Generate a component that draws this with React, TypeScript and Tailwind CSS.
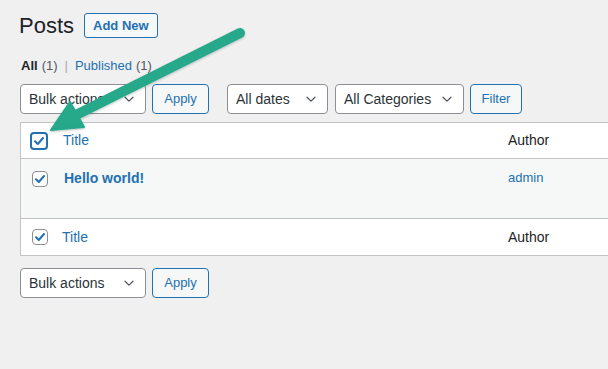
import React from "react";

const Chevron = () => (
  <svg width="14" height="14" viewBox="0 0 16 16" className="shrink-0">
    <path d="M3.5 6 L8 10.5 L12.5 6" fill="none" stroke="#50575e" strokeWidth="1.4" strokeLinecap="round" strokeLinejoin="round" />
  </svg>
);

const Select = ({ label, w }: { label: string; w: string }) => (
  <div className={`${w} h-[30px] flex items-center justify-between bg-white border border-[#8c8f94] rounded-[4px] pl-[8px] pr-[9px] text-[14px] text-[#2c3338]`}>
    <span>{label}</span>
    <Chevron />
  </div>
);

const Btn = ({ label, w }: { label: string; w: string }) => (
  <div className={`${w} h-[30px] flex items-center justify-center bg-[#f6f7f7] border border-[#2271b1] rounded-[4px] text-[13px] text-[#2271b1]`}>
    {label}
  </div>
);

const Check = ({ big }: { big?: boolean }) => (
  <div
    className={
      big
        ? "w-[18px] h-[18px] border-2 border-[#2271b1] rounded-[4px] bg-white flex items-center justify-center"
        : "w-[16px] h-[16px] border border-[#8c8f94] rounded-[4px] bg-white flex items-center justify-center"
    }
  >
    <svg width="12" height="12" viewBox="0 0 12 12">
      <path d="M2 6.2 L4.8 9 L10 3" fill="none" stroke="#2271b1" strokeWidth="2" strokeLinecap="round" strokeLinejoin="round" />
    </svg>
  </div>
);

export default function App() {
  return (
    <div
      className="relative w-[608px] h-[369px] overflow-hidden bg-[#f0f0f1] pl-[20px]"
      style={{ fontFamily: '"Liberation Sans", Arial, sans-serif' }}
    >
      <div className="flex items-center pt-[13px] h-[25px] box-content">
        <h1 className="text-[22px] leading-[25px] text-[#1d2327] -ml-[1px]">Posts</h1>
        <div className="ml-[10px] h-[25px] px-[8px] flex items-center bg-[#f6f7f7] border border-[#2271b1] rounded-[3px] text-[13px] font-bold text-[#2271b1]">
          Add New
        </div>
      </div>

      <div className="mt-[20px] flex items-center text-[13px] leading-[16px] pl-[1px]">
        <span className="font-bold text-[#1d2327]">All</span>
        <span className="text-[#50575e] ml-[4px]">(1)</span>
        <span className="text-[#a7aaad] mx-[7px]">|</span>
        <span className="text-[#2271b1]">Published</span>
        <span className="text-[#50575e] ml-[4px]">(1)</span>
      </div>

      <div className="mt-[10px] flex items-center">
        <Select label="Bulk actions" w="w-[126px]" />
        <div className="ml-[6px]">
          <Btn label="Apply" w="w-[57px]" />
        </div>
        <div className="ml-[18px]">
          <Select label="All dates" w="w-[101px]" />
        </div>
        <div className="ml-[7px]">
          <Select label="All Categories" w="w-[129px]" />
        </div>
        <div className="ml-[6px]">
          <Btn label="Filter" w="w-[52px]" />
        </div>
      </div>

      <div className="mt-[8px] w-[640px] border border-[#c3c4c7] bg-white text-[14px]">
        <div className="h-[36px] flex items-center border-b border-[#c3c4c7]">
          <div className="w-[42px] pl-[9px] flex items-center">
            <Check big />
          </div>
          <span className="text-[#2271b1]">Title</span>
          <span className="ml-auto w-[151px] text-[#1d2327]">Author</span>
        </div>
        <div className="h-[60px] flex items-start bg-[#f6f7f7] border-b border-[#c3c4c7] pt-[9px]">
          <div className="w-[43px] pl-[11px] mt-[3px] flex items-center">
            <Check />
          </div>
          <span className="text-[#2271b1] font-bold">Hello world!</span>
          <span className="ml-auto w-[151px] text-[13px] text-[#2271b1]">admin</span>
        </div>
        <div className="h-[36px] flex items-center">
          <div className="w-[41px] pl-[11px] flex items-center">
            <Check />
          </div>
          <span className="text-[#2271b1]">Title</span>
          <span className="ml-auto w-[151px] text-[#1d2327]">Author</span>
        </div>
      </div>

      <div className="mt-[12px] flex items-center">
        <Select label="Bulk actions" w="w-[126px]" />
        <div className="ml-[6px]">
          <Btn label="Apply" w="w-[57px]" />
        </div>
      </div>

      <svg className="absolute left-0 top-0 pointer-events-none" width="608" height="369">
        <defs>
          <filter id="sh" x="-20%" y="-20%" width="140%" height="140%">
            <feDropShadow dx="0" dy="1" stdDeviation="1" floodColor="#000" floodOpacity="0.25" />
          </filter>
        </defs>
        <g filter="url(#sh)">
          <line x1="240" y1="33" x2="74" y2="116" stroke="#25a88b" strokeWidth="10" strokeLinecap="round" />
          <polygon points="51,130 70,102 84,127" fill="#25a88b" stroke="#25a88b" strokeWidth="2" strokeLinejoin="round" />
        </g>
      </svg>
    </div>
  );
}
